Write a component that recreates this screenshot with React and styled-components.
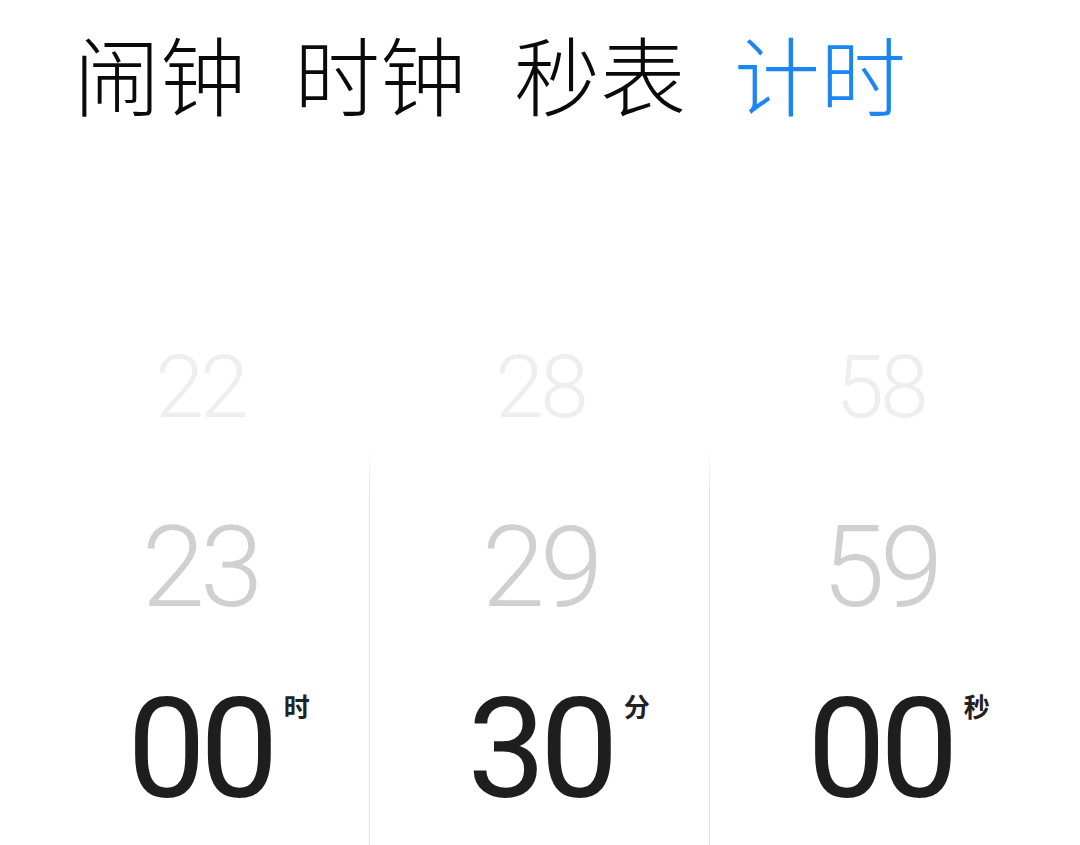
import styled, { createGlobalStyle } from "styled-components";

const GlobalStyle = createGlobalStyle`
  html, body {
    margin: 0;
    padding: 0;
    background: #ffffff;
  }
  body {
    font-family: "Noto Sans CJK SC", "Noto Sans", sans-serif;
  }
`;

const Page = styled.div`
  width: 1080px;
  height: 845px;
  overflow: hidden;
  background: #ffffff;
  display: flex;
  flex-direction: column;
`;

const Tabs = styled.nav`
  display: flex;
  flex-shrink: 0;
  gap: 48px;
  padding: 26px 0 0 74px;
  height: 297px;
  box-sizing: border-box;
`;

const Tab = styled.span`
  font-family: "Noto Sans CJK SC", sans-serif;
  font-size: 86px;
  font-weight: 300;
  line-height: 1.1;
  color: ${(p) => (p.$active ? "#1a86f0" : "#0a0a0a")};
`;

const Picker = styled.div`
  display: grid;
  flex-shrink: 0;
  grid-template-columns: repeat(3, 340px);
  padding: 30px 0 0 30px;
`;

const Column = styled.div`
  display: flex;
  flex-direction: column;
`;

const Lower = styled.div`
  display: flex;
  flex-direction: column;
  padding: 28px 0 20px;
  border-left: 1px solid transparent;
  border-image: ${(p) =>
    p.$divided
      ? "linear-gradient(to bottom, rgba(224,224,224,0), #e2e2e2 12%, #e2e2e2) 1"
      : "none"};
  margin-left: -1px;
`;

const Row = styled.div`
  height: ${(p) => p.$h}px;
  display: flex;
  align-items: center;
  justify-content: center;
`;

const Value = styled.span`
  position: relative;
  top: ${(p) => [4, 2, 0][p.$level]}px;
  font-family: Roboto, "Liberation Sans", sans-serif;
  font-weight: ${(p) => (p.$level === 0 ? 400 : 300)};
  font-size: ${(p) => [140, 114, 88][p.$level]}px;
  letter-spacing: ${(p) => [-6, -5, -4][p.$level]}px;
  line-height: 1;
  color: ${(p) => ["#1e1e1e", "#d0d0d0", "#eeeeee"][p.$level]};
`;

const Unit = styled.span`
  position: absolute;
  left: calc(100% + 11px);
  top: 14px;
  font-family: "Noto Sans CJK SC", sans-serif;
  font-size: 26px;
  font-weight: 700;
  letter-spacing: 0;
  line-height: 1;
  color: #222222;
`;

const columns = [
  { above: "22", prev: "23", current: "00", unit: "时" },
  { above: "28", prev: "29", current: "30", unit: "分" },
  { above: "58", prev: "59", current: "00", unit: "秒" },
];

export default function App() {
  return (
    <Page>
      <GlobalStyle />
      <Tabs>
        <Tab>闹钟</Tab>
        <Tab>时钟</Tab>
        <Tab>秒表</Tab>
        <Tab $active>计时</Tab>
      </Tabs>
      <Picker>
        {columns.map((c, i) => (
          <Column key={i}>
            <Row $h={120}>
              <Value $level={2}>{c.above}</Value>
            </Row>
            <Lower $divided={i > 0}>
              <Row $h={180}>
                <Value $level={1}>{c.prev}</Value>
              </Row>
              <Row $h={180}>
                <Value $level={0}>
                  {c.current}
                  <Unit>{c.unit}</Unit>
                </Value>
              </Row>
            </Lower>
          </Column>
        ))}
      </Picker>
    </Page>
  );
}
